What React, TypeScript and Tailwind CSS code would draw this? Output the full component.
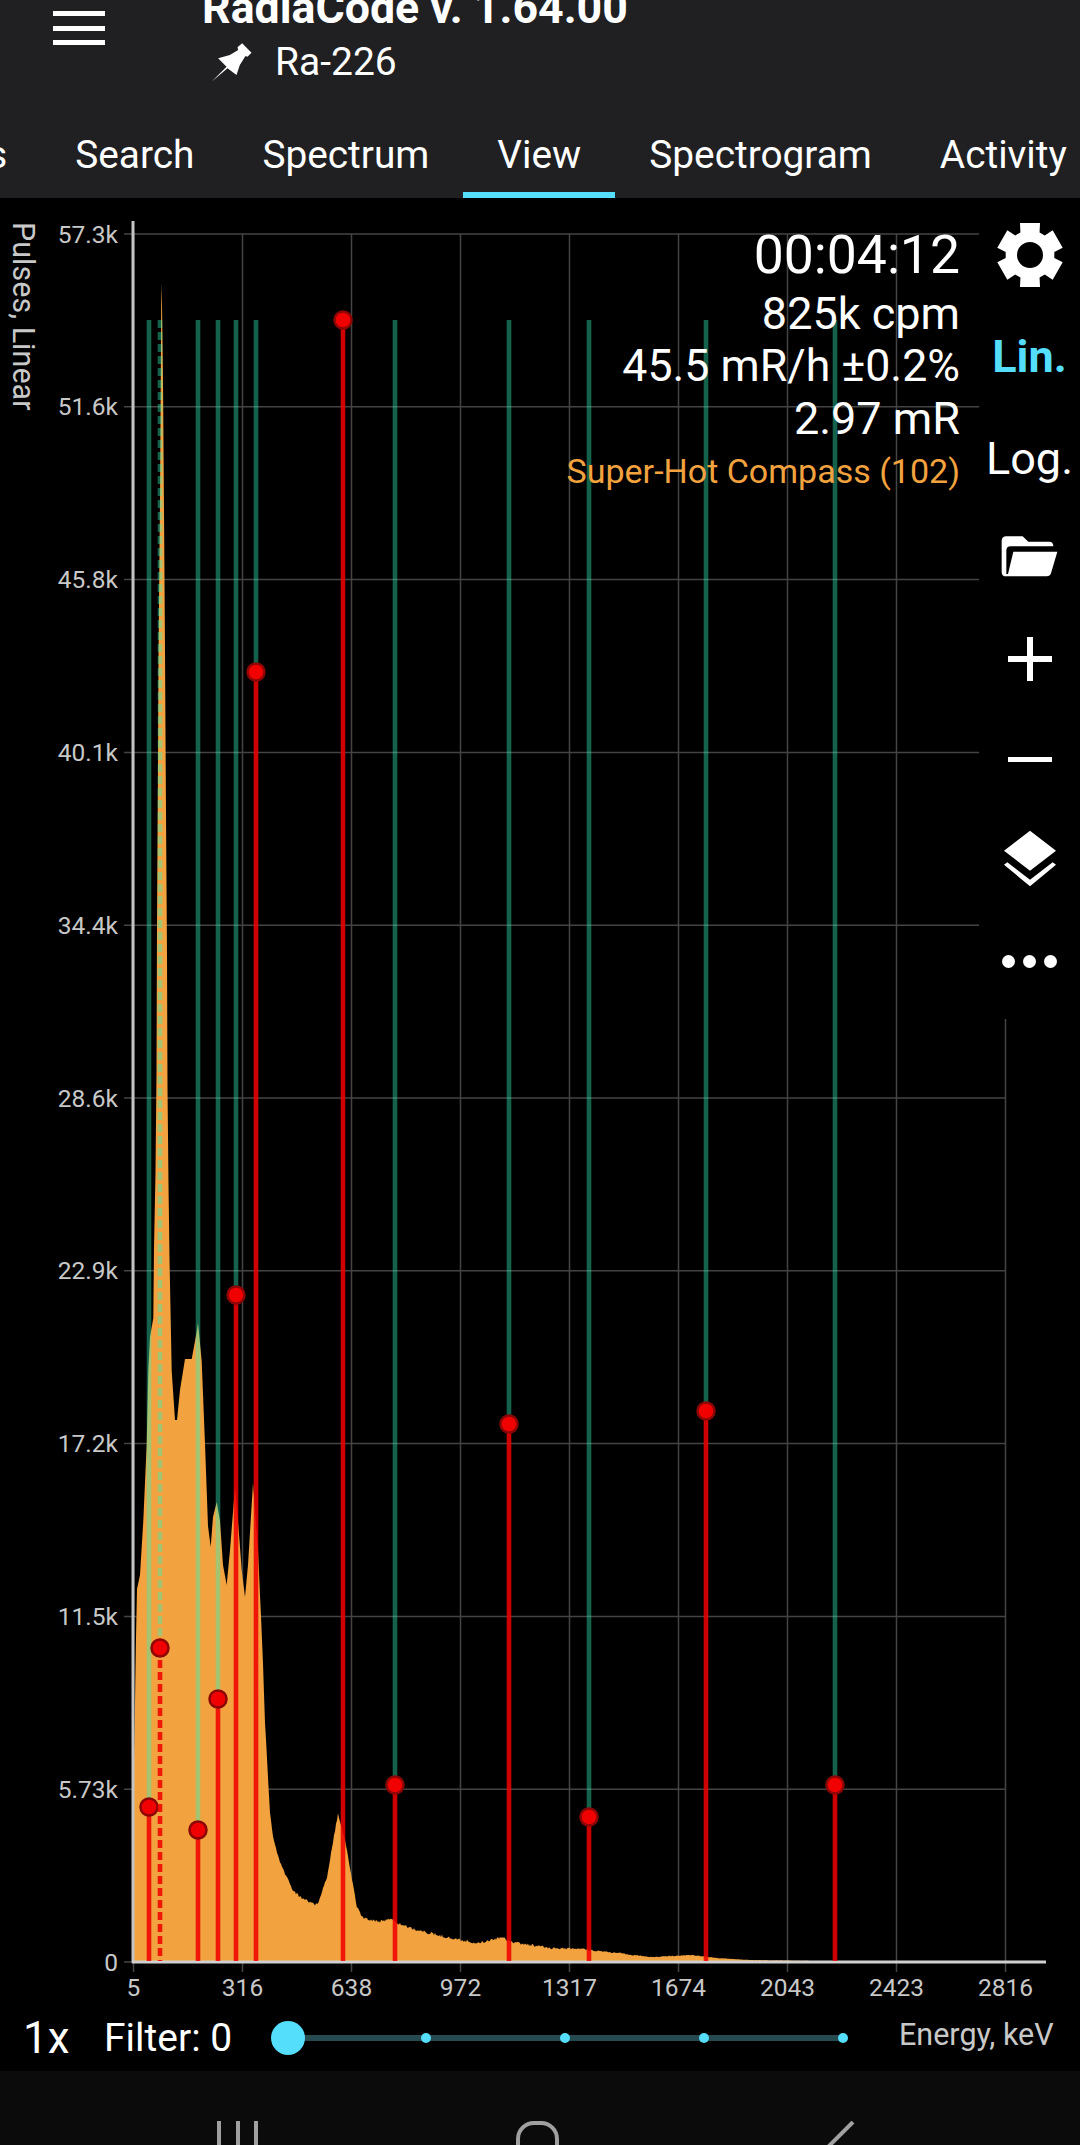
import React from 'react';

const yLabels = ['57.3k', '51.6k', '45.8k', '40.1k', '34.4k', '28.6k', '22.9k', '17.2k', '11.5k', '5.73k', '0'];
const xLabels = ['5', '316', '638', '972', '1317', '1674', '2043', '2423', '2816'];

const BASE = 1962;
const TOP = 320;

// x, y of the ball on each isotope line
const peaks = [
  { x: 149, y: 1807 },
  { x: 160, y: 1648, dashed: true },
  { x: 198, y: 1830 },
  { x: 218, y: 1699 },
  { x: 236, y: 1295 },
  { x: 256, y: 672 },
  { x: 343, y: 320 },
  { x: 395, y: 1785 },
  { x: 509, y: 1424 },
  { x: 589, y: 1817 },
  { x: 706, y: 1411 },
  { x: 835, y: 1785 },
];

const head: number[][] = [
  [134, 1962], [134, 1761], [135, 1703], [136, 1638], [137, 1589], [140, 1575], [143.3, 1521], [146.7, 1444],
  [148.3, 1371], [150, 1337], [153.3, 1318], [154, 1248], [155.5, 1172], [156.5, 1072], [157, 927],
  [158, 764], [158.5, 655], [160, 500], [161, 340], [161.3, 283], [162, 305], [163, 380], [164, 510], [165, 650],
  [166, 813], [167, 954], [167.5, 1087], [168.5, 1185], [169.5, 1258], [171.7, 1371], [175, 1420], [177, 1420], [180, 1390],
  [185, 1359], [191.7, 1359], [196.7, 1332], [198, 1323], [201.7, 1361], [205, 1444], [208, 1526],
  [210.7, 1547], [213, 1517], [216.7, 1502], [220, 1521], [223, 1565], [226.7, 1585], [230, 1550], [235, 1487],
  [238, 1521], [241.7, 1570], [245, 1597], [248, 1565], [253, 1483], [258, 1550],
];

const tail: number[][] = [
  [258, 1550], [263, 1662], [265, 1723], [270, 1813], [273, 1837], [280, 1863], [293, 1890], [300, 1897],
  [317, 1905], [327, 1877], [332, 1847], [338, 1813], [345, 1840], [357, 1907], [363, 1918], [383, 1922],
  [388, 1918], [397, 1923], [417, 1930], [450, 1938], [477, 1943], [483, 1942], [500, 1937], [517, 1943],
  [550, 1948], [583, 1949], [617, 1953], [650, 1957], [693, 1955], [717, 1958], [750, 1960],
  [850, 1961.5], [880, 1962],
];

function spectrumPath() {
  const pts = head.map((p) => `${p[0]},${p[1]}`);
  for (let i = 0; i < tail.length - 1; i++) {
    const [x0, y0] = tail[i];
    const [x1, y1] = tail[i + 1];
    for (let x = x0; x < x1; x++) {
      const y = y0 + ((y1 - y0) * (x - x0)) / (x1 - x0);
      const amp = Math.min(1.6, (BASE - y) * 0.08);
      const r = Math.sin(x * 12.9898) * 43758.5453;
      const noise = (r - Math.floor(r) - 0.5) * 2 * amp;
      pts.push(`${x},${y + noise}`);
    }
  }
  pts.push(`880,${BASE}`);
  return `M${pts.join('L')}Z`;
}

function gearPath() {
  const poly: number[][] = [];
  for (let i = 0; i < 6; i++) {
    const a = i * 60;
    for (const [deg, r] of [[-17.4, 33.5], [17.4, 33.5], [23, 24.5], [37, 24.5]]) {
      const t = ((a + deg) * Math.PI) / 180;
      poly.push([r * Math.sin(t), -r * Math.cos(t)]);
    }
  }
  return `M${poly.map((p) => p.join(',')).join('L')}Z M13,0 A13,13 0 1,0 -13,0 A13,13 0 1,0 13,0Z`;
}

const Chart = () => (
  <svg viewBox="0 198 1080 1807" className="block h-[1807px] w-[1080px]" style={{ fontFamily: 'Roboto, sans-serif' }}>
    {yLabels.map((label, i) => {
      const y = 234 + i * 172.8;
      return (
        <g key={label}>
          <line x1={124} x2={1006} y1={y} y2={y} stroke="#444" strokeWidth={1.5} />
          <text x={118} y={y + 8.5} textAnchor="end" fontSize={24.5} fill="#c8c8c8">{label}</text>
        </g>
      );
    })}
    {xLabels.map((label, i) => {
      const x = 133.5 + i * 109;
      return (
        <g key={label}>
          <line x1={x} x2={x} y1={234} y2={1972} stroke="#444" strokeWidth={1.5} />
          <text x={x} y={1996} textAnchor="middle" fontSize={24.5} fill="#c8c8c8">{label}</text>
        </g>
      );
    })}
    <path d={spectrumPath()} fill="#f2a23e" />
    <line x1={133} x2={133} y1={221} y2={1963} stroke="#c4c4c4" strokeWidth={3} />
    <line x1={132} x2={1046} y1={BASE} y2={BASE} stroke="#d0d0d0" strokeWidth={3} />
    <text transform="translate(13,222) rotate(90)" fontSize={30.5} fill="#c8c8c8">Pulses, Linear</text>
    {peaks.map((p) => (
      <g key={p.x}>
        {p.y > TOP && (
          <line x1={p.x} x2={p.x} y1={TOP} y2={p.y} stroke="rgba(50,245,190,0.4)" strokeWidth={4.6} strokeDasharray={p.dashed ? '8 4' : undefined} />
        )}
        <line x1={p.x} x2={p.x} y1={p.y} y2={BASE - 1} stroke="rgba(240,0,0,0.86)" strokeWidth={4.6} strokeDasharray={p.dashed ? '8 4' : undefined} />
        <circle cx={p.x} cy={p.y} r={8.5} fill="#f00000" stroke="#8c0606" strokeWidth={2.5} />
      </g>
    ))}
  </svg>
);

const ToolItem = ({ children }: { children: React.ReactNode }) => (
  <div className="flex h-[101px] items-center justify-center">{children}</div>
);

const Toolbar = () => (
  <div className="absolute right-0 top-0 w-[101px] bg-black pb-[7px] pt-[6px] text-white">
    <ToolItem>
      <svg viewBox="-35 -35 70 70" className="h-[70px] w-[70px]">
        <path d={gearPath()} fill="#fff" fillRule="evenodd" />
      </svg>
    </ToolItem>
    <ToolItem>
      <span className="mt-[3px] text-[45px] font-bold text-[#55defb]">Lin.</span>
    </ToolItem>
    <ToolItem>
      <span className="mt-[4px] text-[45px]">Log.</span>
    </ToolItem>
    <ToolItem>
      <svg viewBox="0 0 300 240" className="mt-[3px] h-[80px] w-[100px]" fill="#fff">
        <path d="M65 66Q65 52 79 52H128L145 68H208Q220 68 220 82H92Q79 82 79 95V172H78Q65 172 65 158Z" />
        <path d="M100 98H232L213 163Q210 172 200 172H78V165H84Z" />
      </svg>
    </ToolItem>
    <ToolItem>
      <svg viewBox="0 0 44 44" className="h-[44px] w-[44px]" fill="#fff">
        <rect x="0" y="19" width="44" height="6" />
        <rect x="19" y="0" width="6" height="44" />
      </svg>
    </ToolItem>
    <ToolItem>
      <div className="h-[5px] w-[44px] bg-white" />
    </ToolItem>
    <ToolItem>
      <svg viewBox="0 0 300 270" className="mt-[4px] h-[90px] w-[100px]" fill="#fff">
        <path d="M150 38L228 98L150 158L72 98Z" />
        <path d="M72 140L82 133L150 185L218 133L228 140L150 205Z" />
      </svg>
    </ToolItem>
    <ToolItem>
      <div className="flex gap-[8px]">
        <div className="h-[13px] w-[13px] rounded-full bg-white" />
        <div className="h-[13px] w-[13px] rounded-full bg-white" />
        <div className="h-[13px] w-[13px] rounded-full bg-white" />
      </div>
    </ToolItem>
  </div>
);

const Tab = ({ label, active }: { label: string; active?: boolean }) => (
  <div className="relative flex h-[80px] shrink-0 items-center px-[34px] pb-[6px] text-[38.8px] text-white">
    {label}
    {active && <div className="absolute bottom-0 left-0 right-0 h-[6px] bg-[#55defb]" />}
  </div>
);

export default function App() {
  return (
    <div className="flex h-[2145px] w-[1080px] flex-col overflow-hidden bg-black font-['Roboto',sans-serif]">
      <header className="h-[198px] shrink-0 overflow-hidden bg-[#202022]">
        <div className="flex h-[118px]">
          <div className="flex flex-col gap-[9.5px] pl-[53px] pt-[11px]">
            <div className="h-[5px] w-[52px] bg-white" />
            <div className="h-[5px] w-[52px] bg-white" />
            <div className="h-[5px] w-[52px] bg-white" />
          </div>
          <div className="ml-[97px]">
            <div className="-mt-[15px] text-[44.7px] font-bold leading-[46px] text-white">RadiaCode v. 1.64.00</div>
            <div className="mt-[8px] flex items-center">
              <svg viewBox="60 20 140 135" className="ml-[6px] h-[45px] w-[47px]" fill="#fff">
                <path d="M70 145L115 100L90 75L125 65L150 50L148 42L162 30L190 58L178 70L172 68L155 95L145 125L118 105Z" />
              </svg>
              <span className="ml-[20px] text-[39px] leading-[46px] text-white">Ra-226</span>
            </div>
          </div>
        </div>
        <div className="-ml-[142px] flex">
          <Tab label="Tracks" />
          <Tab label="Search" />
          <Tab label="Spectrum" />
          <Tab label="View" active />
          <Tab label="Spectrogram" />
          <Tab label="Activity" />
        </div>
      </header>

      <main className="relative shrink-0">
        <Chart />
        <Toolbar />
        <div className="absolute right-[120px] top-[24px] flex flex-col items-end text-white">
          <div className="text-[53.5px] leading-[66px]">00:04:12</div>
          <div className="text-[45px] leading-[52px]">825k cpm</div>
          <div className="text-[44.7px] leading-[52px]">45.5 mR/h ±0.2%</div>
          <div className="text-[45px] leading-[54px]">2.97 mR</div>
          <div className="-mt-[1px] text-[34px] leading-[52px] text-[#f2a23e]">Super-Hot Compass (102)</div>
        </div>
      </main>

      <div className="flex h-[66px] shrink-0 items-center text-white">
        <span className="ml-[23px] w-[81px] text-[44px]">1x</span>
        <span className="w-[184px] text-[39px]">Filter: 0</span>
        <div className="relative flex h-[6px] w-[555px] items-center justify-end bg-[#254a50]">
          <div className="absolute -left-[17px] top-1/2 h-[34px] w-[34px] -translate-y-1/2 rounded-full bg-[#55defb]" />
          <div className="-mr-[5px] flex gap-[129px]">
            <div className="h-[10px] w-[10px] rounded-full bg-[#55defb]" />
            <div className="h-[10px] w-[10px] rounded-full bg-[#55defb]" />
            <div className="h-[10px] w-[10px] rounded-full bg-[#55defb]" />
            <div className="h-[10px] w-[10px] rounded-full bg-[#55defb]" />
          </div>
        </div>
        <span className="ml-[56px] pb-[6px] text-[30.5px] text-[#c8c8c8]">Energy, keV</span>
      </div>

      <nav className="relative flex flex-1 items-start overflow-hidden bg-[#0b0b0b] pl-[217px] pt-[50px]">
        <div className="flex gap-[14.5px]">
          <div className="h-[40px] w-[4px] bg-[#a0a0a0]" />
          <div className="h-[40px] w-[4px] bg-[#a0a0a0]" />
          <div className="h-[40px] w-[4px] bg-[#a0a0a0]" />
        </div>
        <div className="ml-[258px] h-[50px] w-[43px] rounded-t-[18px] border-[4px] border-[#a0a0a0]" />
        <svg viewBox="0 0 30 50" className="ml-[266px] h-[50px] w-[30px]" fill="none" stroke="#a0a0a0" strokeWidth={4}>
          <path d="M28 1L3 26L28 50" />
        </svg>
      </nav>
    </div>
  );
}
